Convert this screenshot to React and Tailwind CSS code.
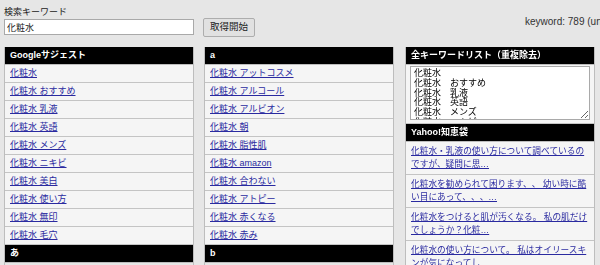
import React from "react";

const google = [
  "化粧水",
  "化粧水 おすすめ",
  "化粧水 乳液",
  "化粧水 英語",
  "化粧水 メンズ",
  "化粧水 ニキビ",
  "化粧水 美白",
  "化粧水 使い方",
  "化粧水 無印",
  "化粧水 毛穴",
];

const alpha = [
  "化粧水 アットコスメ",
  "化粧水 アルコール",
  "化粧水 アルビオン",
  "化粧水 朝",
  "化粧水 脂性肌",
  "化粧水 amazon",
  "化粧水 合わない",
  "化粧水 アトピー",
  "化粧水 赤くなる",
  "化粧水 赤み",
];

const chiebukuro = [
  "化粧水・乳液の使い方について調べているのですが、疑問に思…",
  "化粧水を勧められて困ります、、 幼い時に酷い目にあって、、、…",
  "化粧水をつけると肌が汚くなる。 私の肌だけでしょうか？化粧…",
  "化粧水の使い方について。 私はオイリースキンが気になってし…",
];

const allKeywords = [
  "化粧水",
  "化粧水　おすすめ",
  "化粧水　乳液",
  "化粧水　英語",
  "化粧水　メンズ",
  "化粧水　ニキビ",
  "化粧水　美白",
  "化粧水　使い方",
];

const Header = ({ children }) => (
  <div className="h-[18px] bg-black text-white font-bold pl-[5px] flex items-center border-b border-[#bdbdbd]">
    {children}
  </div>
);

const Row = ({ children }) => (
  <div className="h-[18px] bg-[#f5f5f5] border-b border-[#c4c4c4] pl-[5px] flex items-center">
    <a href="#" className="text-[#2a2aa0] underline">
      {children}
    </a>
  </div>
);

const App = () => {
  return (
    <div
      className="w-[600px] h-[265px] overflow-hidden bg-[#e6e6e6] text-[9px] text-[#222] [text-spacing-trim:space-all]"
      style={{ fontFamily: '"Liberation Sans", "Noto Sans CJK JP", sans-serif' }}
    >
      {/* search bar */}
      <div className="flex pt-[5px] pl-[4px] gap-[10px] h-[47px]">
        <div className="w-[190px] shrink-0">
          <div className="h-[14px] leading-[14px]">検索キーワード</div>
          <input
            readOnly
            value="化粧水"
            className="w-[190px] h-[16px] bg-white border border-[#a9a9a9] px-[2px] text-[9px] outline-none"
          />
        </div>
        <div className="w-[190px] shrink-0 pt-[13px] -ml-[1px]">
          <button className="h-[19px] px-[6px] bg-[#e1e1e1] border border-[#adadad] rounded-[2px] text-[9.5px] whitespace-nowrap">
            取得開始
          </button>
        </div>
        <div className="shrink-0 ml-[1px] pl-[121px] pt-[9px] whitespace-nowrap text-[10px] text-[#333]">
          keyword: 789 (unique)
        </div>
      </div>

      {/* columns */}
      <div className="flex pl-[4px] gap-[10px]">
        <div className="w-[190px] shrink-0 border-x border-[#bdbdbd]">
          <Header>Googleサジェスト</Header>
          {google.map((k) => (
            <Row key={k}>{k}</Row>
          ))}
          <Header>あ</Header>
        </div>

        <div className="w-[190px] shrink-0 border-x border-[#bdbdbd]">
          <Header>a</Header>
          {alpha.map((k) => (
            <Row key={k}>{k}</Row>
          ))}
          <Header>b</Header>
        </div>

        <div className="w-[190px] shrink-0 ml-[1px] border-x border-[#bdbdbd]">
          <Header>全キーワードリスト（重複除去）</Header>
          <div className="bg-[#f5f5f5] px-[4px] pt-[1px] pb-[3px] border-b border-[#c4c4c4]">
            <textarea
              readOnly
              value={allKeywords.join("\n")}
              className="block w-[180px] h-[54px] bg-white border border-[#a9a9a9] px-[3px] pt-[2px] pb-0 text-[9px] leading-[9.8px] text-black resize overflow-y-scroll"
            />
          </div>
          <Header>Yahoo!知恵袋</Header>
          {chiebukuro.map((q) => (
            <div key={q} className="bg-[#f5f5f5] border-b border-[#c4c4c4] pl-[5px] pr-[6px] py-[3px] leading-[13px] break-all">
              <a href="#" className="text-[#2a2aa0] underline text-[8.7px]">
                {q}
              </a>
            </div>
          ))}
        </div>
      </div>
    </div>
  );
};

export default App;
